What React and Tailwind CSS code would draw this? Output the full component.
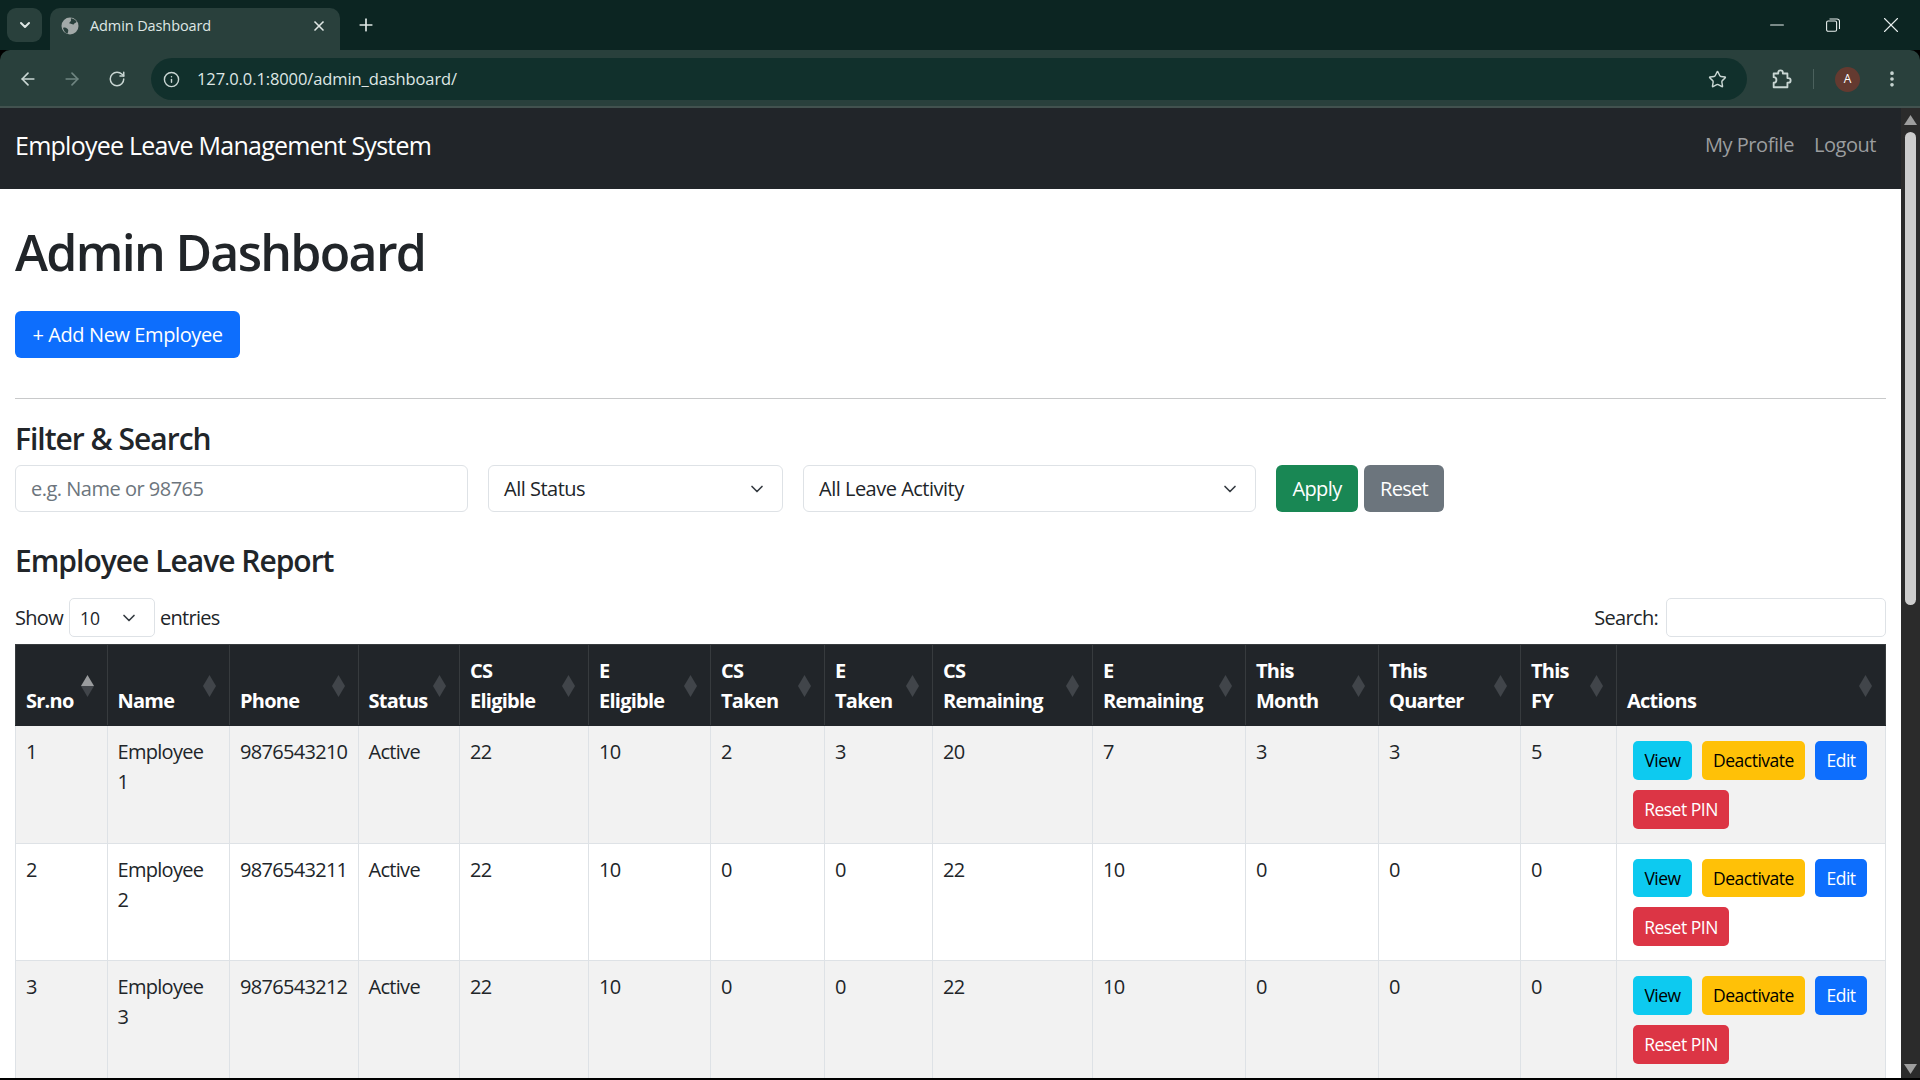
import React from 'react'
import { ArrowLeft, ArrowRight, RotateCw, Info, Star, EllipsisVertical, Plus, X, ChevronDown, Minus } from 'lucide-react'

const font = "font-['Open_Sans','Liberation_Sans',sans-serif]"

const columns = [
  { top: '', label: 'Sr.no', width: 'w-[91.5px]', active: true },
  { top: '', label: 'Name', width: 'w-[122.5px]' },
  { top: '', label: 'Phone', width: 'w-[128.5px]' },
  { top: '', label: 'Status', width: 'w-[101.5px]' },
  { top: 'CS', label: 'Eligible', width: 'w-[129px]' },
  { top: 'E', label: 'Eligible', width: 'w-[122px]' },
  { top: 'CS', label: 'Taken', width: 'w-[114px]' },
  { top: 'E', label: 'Taken', width: 'w-[108px]' },
  { top: 'CS', label: 'Remaining', width: 'w-[160px]' },
  { top: 'E', label: 'Remaining', width: 'w-[153px]' },
  { top: 'This', label: 'Month', width: 'w-[133px]' },
  { top: 'This', label: 'Quarter', width: 'w-[142px]' },
  { top: 'This', label: 'FY', width: 'w-[96px]' },
  { top: '', label: 'Actions', width: 'w-[269px]' },
]

const rows = [
  ['1', '1', '9876543210', 'Active', '22', '10', '2', '3', '20', '7', '3', '3', '5'],
  ['2', '2', '9876543211', 'Active', '22', '10', '0', '0', '22', '10', '0', '0', '0'],
  ['3', '3', '9876543212', 'Active', '22', '10', '0', '0', '22', '10', '0', '0', '0'],
]

const SortIcon = ({ active }) => (
  <svg className='absolute right-[13px] top-[30px]' width='13' height='22' viewBox='0 0 13 22'>
    <path d='M6.5 0L13 11H0Z' fill={active ? '#9a9c9e' : '#41454a'} />
    <path d='M6.5 22L13 11H0Z' fill='#41454a' />
  </svg>
)

const Globe = () => (
  <svg width='18' height='18' viewBox='0 0 18 18'>
    <circle cx='9' cy='9' r='8.5' fill='#a3aaa9' />
    <path d='M10 1.2c2.6.3 4.6 1.8 5.6 3.6-.8 1.2-2 1.2-2.6 2.2-.7 1-1.6.4-2.4 0-1-.4-2.4.3-2.2-1.2.2-1 1.4-1 1.6-2 .2-.9-.4-1.6 0-2.6zM2 11c1.4-.8 3-.4 4 .4 1 .8 1.6 1.6 1.2 2.8-.3 1-.4 2-.8 2.6C4.400 16 2.800 13.800 2 11z' fill='#29403c' />
  </svg>
)

const Extension = () => (
  <svg className='ml-[23px]' width='22' height='22' viewBox='0 0 24 24' fill='none' stroke='currentColor' strokeWidth='2' strokeLinejoin='round'>
    <path d='M4 6h5V5a2.500 2.500 0 0 1 5 0v1h5v5h1a2.500 2.500 0 0 1 0 5h-1v5H4v-5a3 3 0 0 0 0-6z' />
  </svg>
)

const ActionButton = ({ className, children }) => (
  <span className={`flex h-[38.75px] items-center justify-center rounded-[5px] text-[17.5px] ${className}`}>{children}</span>
)

const Caret = () => <ChevronDown className='text-[#343a40]' size={20} strokeWidth={2} />

export default function App() {
  return (
    <div className={`flex h-screen w-full flex-col overflow-hidden bg-black ${font}`}>
      {/* browser chrome */}
      <div className='flex h-[50px] shrink-0 items-end bg-[#0c2522] pl-[7px]'>
        <div className='mb-[8px] flex h-[34px] w-[35px] items-center justify-center rounded-[9px] bg-[#29403c]'>
          <ChevronDown size={16} strokeWidth={3} className='text-[#dfe7e5]' />
        </div>
        <div className='ml-[8px] flex h-[42px] w-[290px] items-center rounded-t-[10px] bg-[#29403c] pb-[7px] pl-[11px] pr-[13px]'>
          <Globe />
          <span className='ml-[11px] flex-1 text-[14.5px] tracking-[-0.1px] text-[#dfe7e5]'>Admin Dashboard</span>
          <X size={16} strokeWidth={2.5} className='text-[#dfe7e5]' />
        </div>
        <Plus size={20} strokeWidth={2} className='mb-[15px] ml-[16px] text-[#dfe7e5]' />
        <div className='flex-1' />
        <div className='mb-[12px] flex items-center text-[#e8efee]'>
          <Minus size={22} strokeWidth={1.1} />
          <svg className='ml-[38px]' width='14' height='14' viewBox='0 0 14 14' fill='none' stroke='#e8efee' strokeWidth='1.1'>
            <rect x='0.6' y='3' width='10' height='10.300' rx='1.500' />
            <path d='M3.500 1h7.500a2.500 2.500 0 0 1 2.500 2.500v7.500' />
          </svg>
          <X className='ml-[38px] mr-[16px]' size={26} strokeWidth={1} />
        </div>
      </div>
      <div className='flex h-[58px] shrink-0 items-center rounded-t-[10px] border-b-2 border-[#42524f] bg-[#29403c] pl-[18px] pr-[18px] pt-[2px] text-[#c9d6d3]'>
        <ArrowLeft size={20} />
        <ArrowRight size={20} className='ml-[24px] text-[#6f8581]' />
        <RotateCw size={18} className='ml-[26px]' />
        <div className='ml-[25px] flex h-[42px] flex-1 items-center rounded-full bg-[#11302c] pl-[10px] pr-[20px]'>
          <Info size={17} className='ml-[2px]' />
          <span className='ml-[17px] flex-1 text-[16.5px] tracking-[-0.1px] text-[#dfe7e5]'>127.0.0.1:8000/admin_dashboard/</span>
          <Star size={19} strokeWidth={1.8} />
        </div>
        <Extension />
        <div className='ml-[21px] h-[20px] w-[1.5px] bg-[#4b615d]' />
        <div className='ml-[21px] flex h-[25px] w-[25px] items-center justify-center rounded-full bg-[#643a30] text-[12px] text-white'>A</div>
        <EllipsisVertical size={20} strokeWidth={2.4} className='ml-[22px]' />
      </div>

      <div className='flex min-h-0 flex-1'>
        <div className='min-w-0 flex-1 overflow-hidden bg-white text-[20px] leading-[30px] text-[#212529]'>
          <nav className='flex h-[81px] items-center justify-between bg-[#212529] pb-[8px] pl-[15px] pr-[25px]'>
            <span className='text-[25px] tracking-[-0.75px] text-white'>Employee Leave Management System</span>
            <div className='flex gap-[20px] tracking-[-0.45px] text-[#9b9d9f]'>
              <span>My Profile</span>
              <span>Logout</span>
            </div>
          </nav>

          <div className='px-[15px]'>
            <h1 className='mt-[33px] text-[50px] font-semibold leading-[60px] tracking-[-1.7px]'>Admin Dashboard</h1>
            <div className='mt-[29px] flex h-[47px] w-[225px] items-center justify-center rounded-[6px] bg-[#0d6efd] pt-[1px] tracking-[-0.4px] text-white'>+ Add New Employee</div>
            <div className='mt-[40px] h-px bg-[#c8c9ca]' />
            <h4 className='mt-[22px] text-[30px] font-semibold leading-[36px] tracking-[-1px]'>Filter &amp; Search</h4>
            <div className='mt-[8px] flex items-center'>
              <div className='flex h-[47px] w-[453px] items-center rounded-[6px] border border-[#dee2e6] px-[15px] pt-[1px] tracking-[-0.5px] text-[#6c757d]'>e.g. Name or 98765</div>
              <div className='ml-[20px] flex h-[47px] w-[295px] items-center justify-between rounded-[6px] border border-[#dee2e6] pl-[15px] pr-[15px] tracking-[-0.5px]'><span className='pt-[1px]'>All Status</span><Caret /></div>
              <div className='ml-[20px] flex h-[47px] w-[453px] items-center justify-between rounded-[6px] border border-[#dee2e6] pl-[15px] pr-[15px] tracking-[-0.5px]'><span className='pt-[1px]'>All Leave Activity</span><Caret /></div>
              <div className='ml-[20px] flex h-[47px] w-[82px] items-center justify-center rounded-[6px] bg-[#198754] pt-[1px] tracking-[-0.6px] text-white'>Apply</div>
              <div className='ml-[6px] flex h-[47px] w-[80px] items-center justify-center rounded-[6px] bg-[#6c757d] pt-[1px] tracking-[-0.7px] text-white'>Reset</div>
            </div>
            <h4 className='mt-[31px] text-[30px] font-semibold leading-[36px] tracking-[-1px]'>Employee Leave Report</h4>
            <div className='mt-[19px] flex h-[39px] items-center'>
              <span className='tracking-[-0.7px]'>Show</span>
              <div className='ml-[6px] flex h-[39px] w-[86px] items-center justify-between rounded-[5px] border border-[#dee2e6] pl-[10px] pr-[15px] text-[17.5px]'>10<Caret /></div>
              <span className='ml-[5px] tracking-[-0.7px]'>entries</span>
              <span className='ml-auto tracking-[-0.7px]'>Search:</span>
              <div className='ml-[8px] h-[39px] w-[220px] rounded-[5px] border border-[#dee2e6]' />
            </div>

            <table className='mt-[7px] w-[1870px] table-fixed border-collapse'>
              <colgroup>
                {columns.map((col, i) => <col key={i} className={col.width} />)}
              </colgroup>
              <thead>
                <tr className='h-[81px] bg-[#212529] text-white'>
                  {columns.map((col, i) => (
                    <th key={i} className='relative border border-[#373b3e] border-b-[#212529] px-[10px] pb-[9px] pt-[6px] text-left align-bottom font-bold tracking-[-0.75px]'>
                      {col.top && <div>{col.top}</div>}
                      <div>{col.label}</div>
                      <SortIcon active={col.active} />
                    </th>
                  ))}
                </tr>
              </thead>
              <tbody>
                {rows.map((row, r) => (
                  <tr key={r} className={r % 2 === 0 ? 'bg-[#f2f2f2]' : 'bg-white'}>
                    {row.map((value, i) => (
                      <td key={i} className='border border-[#dee2e6] px-[10px] pb-[9px] pt-[11px] align-top tracking-[-0.7px]'>
                        {i === 1 ? <>Employee<br />{value}</> : value}
                      </td>
                    ))}
                    <td className='border border-[#dee2e6] pb-[14px] pl-[16px] pr-[14px] pt-[15px]'>
                      <div className='flex flex-wrap gap-[10px] tracking-[-0.5px]'>
                        <ActionButton className='w-[59px] bg-[#0dcaf0] text-black'>View</ActionButton>
                        <ActionButton className='w-[103px] bg-[#ffc107] text-black'>Deactivate</ActionButton>
                        <ActionButton className='w-[52px] bg-[#0d6efd] text-white'>Edit</ActionButton>
                        <ActionButton className='w-[96px] bg-[#dc3545] text-white'>Reset PIN</ActionButton>
                      </div>
                    </td>
                  </tr>
                ))}
              </tbody>
            </table>
          </div>
        </div>

        {/* scrollbar */}
        <div className='flex w-[19px] shrink-0 flex-col items-center bg-[#2b2b2b] pt-[7px]'>
          <svg width='13' height='10' viewBox='0 0 13 10'><path d='M6.500 0L13 10H0Z' fill='#9e9e9e' /></svg>
          <div className='mt-[7px] h-[473px] w-[11px] rounded-full bg-[#cdcdcd]' />
          <div className='flex-1' />
          <svg className='mb-[4px]' width='13' height='10' viewBox='0 0 13 10'><path d='M6.500 10L13 0H0Z' fill='#9e9e9e' /></svg>
        </div>
      </div>
      <div className='h-[2px] shrink-0 bg-black' />
    </div>
  )
}
